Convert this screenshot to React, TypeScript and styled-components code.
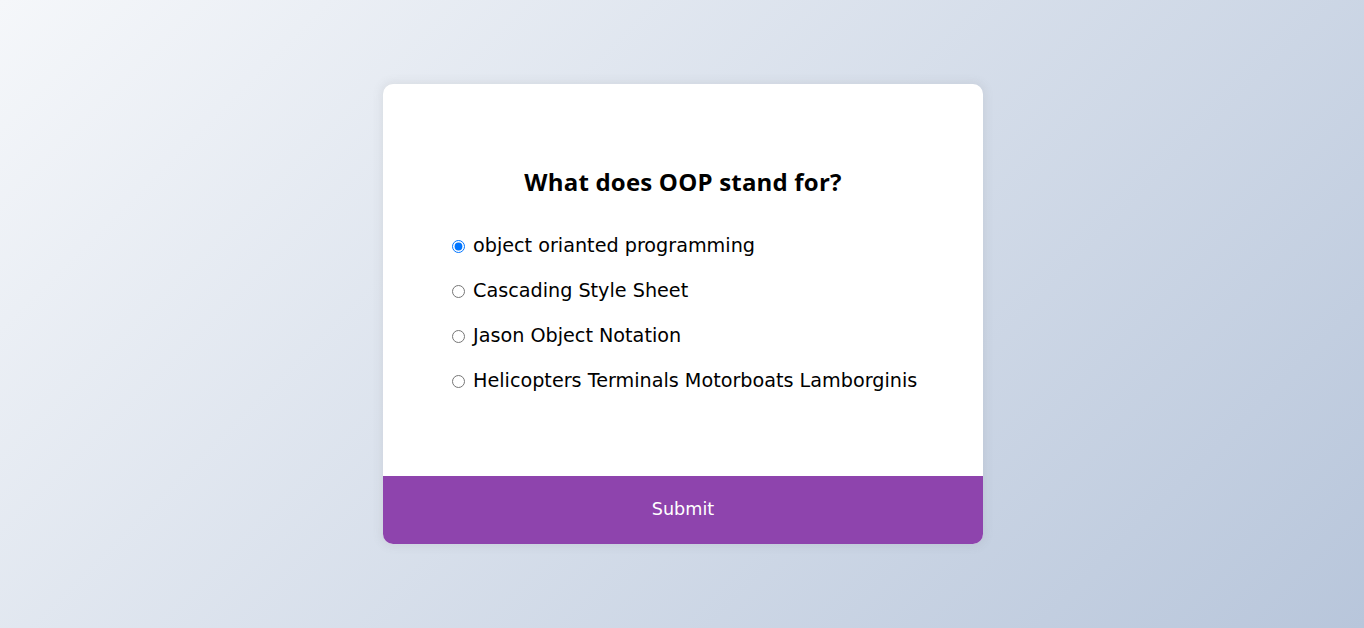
import React, { useState } from "react";
import styled, { createGlobalStyle } from "styled-components";

const Global = createGlobalStyle`
  html, body { margin: 0; padding: 0; }
  body {
    background-color: #b8c6db;
    background-image: linear-gradient(315deg, #b8c6db 0%, #f5f7fa 100%);
    font-family: "DejaVu Sans", "Open Sans", sans-serif;
    height: 100vh;
    overflow: hidden;
    padding-left: 2px;
    box-sizing: border-box;
    display: flex;
    align-items: center;
    justify-content: center;
  }
  #root { display: flex; align-items: center; justify-content: center; width: 100%; height: 100%; }
`;

const Card = styled.div`
  background-color: #fff;
  border-radius: 10px;
  box-shadow: 0 0 10px 2px rgba(100, 100, 100, 0.1);
  width: 600px;
  overflow: hidden;
`;

const Header = styled.div`
  padding: 64px;
`;

const Title = styled.h2`
  margin: 0;
  padding: 16px;
  text-align: center;
  font-family: "Open Sans", "DejaVu Sans", sans-serif;
  font-size: 24px;
  line-height: 36px;
  font-weight: 700;
  letter-spacing: 0.2px;
  color: #000;
`;

const List = styled.ul`
  list-style: none;
  padding: 0;
  margin: 16px 0;
`;

const Item = styled.li`
  font-size: 19.2px;
  line-height: 28.8px;
  margin: 16px 0;
  display: flex;
  align-items: center;
`;

const Radio = styled.input`
  width: 13px;
  height: 13px;
  margin: 0 8px 0 5px;
  accent-color: #0075ff;
`;

const Label = styled.label`
  cursor: pointer;
  color: #000;
`;

const Button = styled.button`
  display: block;
  width: 100%;
  background-color: #8e44ad;
  color: #fff;
  border: none;
  font-family: inherit;
  font-size: 17.6px;
  line-height: 26.4px;
  padding: 20.8px;
  cursor: pointer;
`;

const answers = [
  "object orianted programming",
  "Cascading Style Sheet",
  "Jason Object Notation",
  "Helicopters Terminals Motorboats Lamborginis",
];

export default function App() {
  const [sel, setSel] = useState(0);
  return (
    <>
      <Global />
      <Card>
        <Header>
          <Title>What does OOP stand for?</Title>
          <List>
            {answers.map((a, i) => (
              <Item key={a}>
                <Radio
                  type="radio"
                  name="answer"
                  id={`a${i}`}
                  checked={sel === i}
                  onChange={() => setSel(i)}
                />
                <Label htmlFor={`a${i}`}>{a}</Label>
              </Item>
            ))}
          </List>
        </Header>
        <Button>Submit</Button>
      </Card>
    </>
  );
}
